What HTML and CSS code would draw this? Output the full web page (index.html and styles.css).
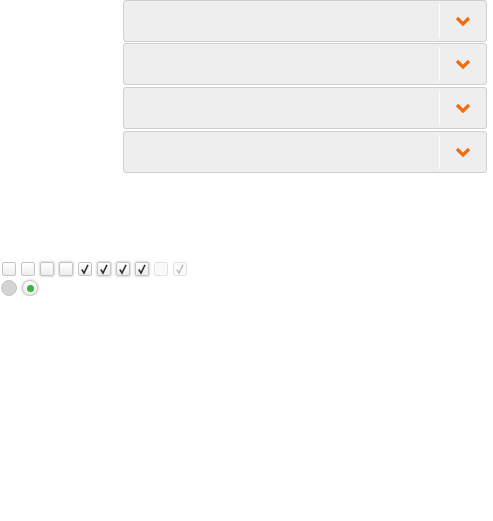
FILE: index.html
```html
<!DOCTYPE html>
<html>
<head>
<meta charset="utf-8">
<link rel="stylesheet" href="styles.css">
</head>
<body>
<div class="selects">
  <div class="select first"><span class="field"></span><span class="arrow"><svg width="16" height="10" viewBox="0 0 16 10"><path d="M2 2 L8 8 L14 2" fill="none" stroke="#f26b0f" stroke-width="3.2"/></svg></span></div>
  <div class="select"><span class="field"></span><span class="arrow"><svg width="16" height="10" viewBox="0 0 16 10"><path d="M2 2 L8 8 L14 2" fill="none" stroke="#f26b0f" stroke-width="3.2"/></svg></span></div>
  <div class="select"><span class="field"></span><span class="arrow"><svg width="16" height="10" viewBox="0 0 16 10"><path d="M2 2 L8 8 L14 2" fill="none" stroke="#f26b0f" stroke-width="3.2"/></svg></span></div>
  <div class="select"><span class="field"></span><span class="arrow"><svg width="16" height="10" viewBox="0 0 16 10"><path d="M2 2 L8 8 L14 2" fill="none" stroke="#f26b0f" stroke-width="3.2"/></svg></span></div>
</div>
<div class="checks">
  <span class="cb"></span>
  <span class="cb"></span>
  <span class="cb glow"></span>
  <span class="cb glow"></span>
  <span class="cb"><svg class="tick" width="12" height="12" viewBox="0 0 12 12"><path d="M2.8 6.5 L5 10 L9 1.8" fill="none" stroke="#333" stroke-width="1.6"/></svg></span>
  <span class="cb glow"><svg class="tick" width="12" height="12" viewBox="0 0 12 12"><path d="M2.8 6.5 L5 10 L9 1.8" fill="none" stroke="#333" stroke-width="1.6"/></svg></span>
  <span class="cb glow"><svg class="tick" width="12" height="12" viewBox="0 0 12 12"><path d="M2.8 6.5 L5 10 L9 1.8" fill="none" stroke="#333" stroke-width="1.6"/></svg></span>
  <span class="cb glow"><svg class="tick" width="12" height="12" viewBox="0 0 12 12"><path d="M2.8 6.5 L5 10 L9 1.8" fill="none" stroke="#333" stroke-width="1.6"/></svg></span>
  <span class="cb dis"></span>
  <span class="cb dis"><svg class="tick" width="12" height="12" viewBox="0 0 12 12"><path d="M2.8 6.5 L5 10 L9 1.8" fill="none" stroke="#b8b8b8" stroke-width="1.4"/></svg></span>
</div>
<div class="radios">
  <span class="rd grey"></span>
  <span class="rd on"><span class="dot"></span></span>
</div>
</body>
</html>
```
FILE: styles.css
```css
html, body { margin: 0; padding: 0; background: #fff; }
body { font-family: "DejaVu Sans", sans-serif; }
.selects { margin-left: 123px; width: 364px; }
.select {
  box-sizing: border-box;
  height: 42px;
  margin-bottom: 2px;
  background: #eeeeee;
  border: 1px solid #cfcfcf;
  border-radius: 3px;
  display: flex;
  align-items: stretch;
}
.select.first { margin-bottom: 1px; }
.field { flex: 1; }
.arrow {
  width: 46px;
  margin: 3px 0;
  border-left: 1px solid #ffffff;
  display: flex;
  align-items: center;
  justify-content: center;
}
.arrow svg { display: block; }
.checks {
  margin-top: 89px;
  padding-left: 2px;
  display: flex;
  gap: 5px;
  height: 15px;
}
.cb {
  box-sizing: border-box;
  width: 14px;
  height: 14px;
  border: 1px solid #c4c4c4;
  border-radius: 2px;
  background: linear-gradient(#ffffff, #ececec);
  display: flex;
  align-items: center;
  justify-content: center;
}
.tick { display: block; }
.cb.glow { box-shadow: 0 0 2px 1px #dcdcdc; }
.cb.dis { border-color: #e2e2e2; background: #fafafa; }
.radios {
  margin-top: 3px;
  padding-left: 1px;
  display: flex;
  gap: 5px;
}
.rd {
  box-sizing: border-box;
  width: 16px;
  height: 16px;
  border-radius: 50%;
  border: 1px solid #c4c4c4;
  display: flex;
  align-items: center;
  justify-content: center;
}
.rd.grey { background: #d4d4d4; }
.rd.on { background: linear-gradient(#ffffff, #ececec); box-shadow: 0 0 2px 1px #dcdcdc; }
.dot { width: 7px; height: 7px; border-radius: 50%; background: #3cb43c; }
```
